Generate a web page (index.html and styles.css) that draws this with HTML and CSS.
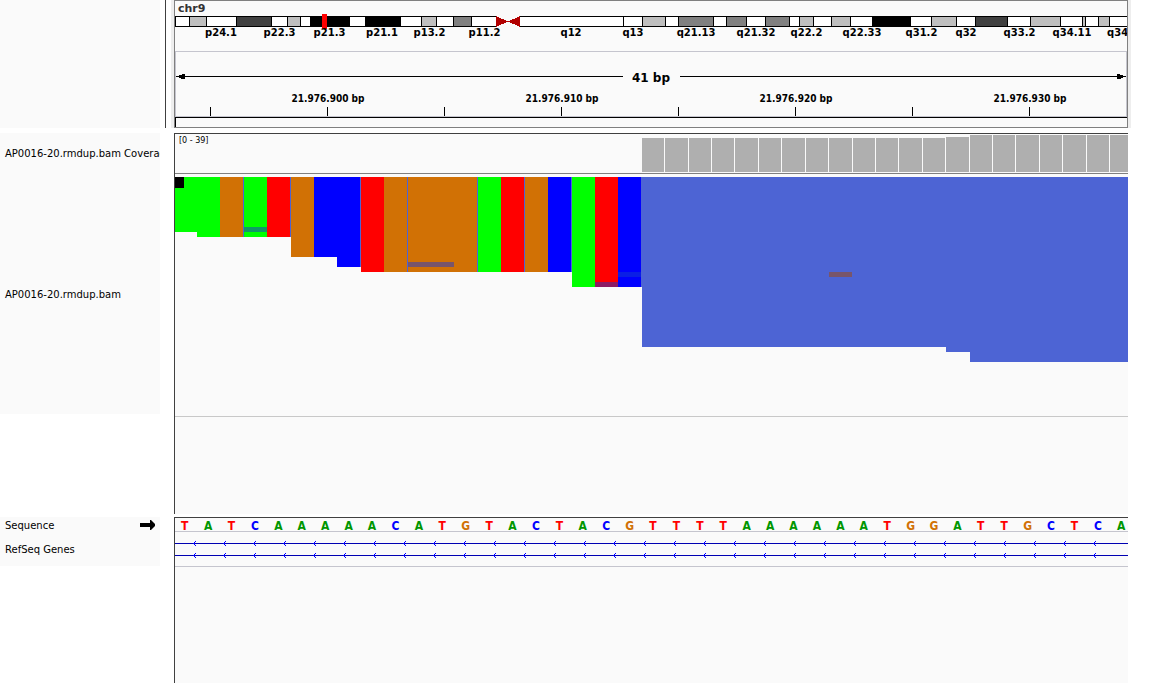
FILE: index.html
```
<!DOCTYPE html>
<html lang="en">
<head>
<meta charset="utf-8">
<title>chr9 genome viewer</title>
<link rel="stylesheet" href="styles.css">
</head>
<body>
<main class="viewer">
  <section class="row row-header">
    <div class="names"></div>
    <div class="splitter"></div>
    <div class="header-panel">
      <h1 class="chrom-name">chr9</h1>
      <svg class="ideogram" role="img" aria-label="Chromosome 9 ideogram">
        <svg class="shapes" viewBox="0 0 952 37" preserveAspectRatio="none">
          <g class="band">
            <rect class="b0" x="0.5" y="2.5" width="321" height="10"/>
            <rect class="b25" x="14.5" y="2.5" width="17" height="10"/>
            <rect class="b75" x="61.5" y="2.5" width="35" height="10"/>
            <rect class="b25" x="112.5" y="2.5" width="13" height="10"/>
            <rect class="b100" x="135.5" y="2.5" width="39" height="10"/>
            <rect class="b100" x="190.5" y="2.5" width="35" height="10"/>
            <rect class="b25" x="246.5" y="2.5" width="15" height="10"/>
            <rect class="b50" x="278.5" y="2.5" width="18" height="10"/>
            <rect class="b0" x="344.5" y="2.5" width="612" height="10"/>
            <rect class="b0" x="448.5" y="2.5" width="19" height="10"/>
            <rect class="b25" x="467.5" y="2.5" width="23" height="10"/>
            <rect class="b50" x="503.5" y="2.5" width="35" height="10"/>
            <rect class="b50" x="551.5" y="2.5" width="20" height="10"/>
            <rect class="b50" x="590.5" y="2.5" width="24" height="10"/>
            <rect class="b25" x="624.5" y="2.5" width="14" height="10"/>
            <rect class="b25" x="656.5" y="2.5" width="19" height="10"/>
            <rect class="b100" x="697.5" y="2.5" width="38" height="10"/>
            <rect class="b25" x="756.5" y="2.5" width="25" height="10"/>
            <rect class="b75" x="800.5" y="2.5" width="32" height="10"/>
            <rect class="b25" x="855.5" y="2.5" width="30" height="10"/>
            <rect class="b25" x="907.5" y="2.5" width="3" height="10"/>
            <rect class="b25" x="923.5" y="2.5" width="11" height="10"/>
          </g>
          <path class="centromere" d="M321 2L333 7.500L321 13ZM345 2L333 7.500L345 13Z"/>
          <rect class="locus" x="147" y="0" width="5" height="15"/>
        </svg>
        <g class="band-names">
          <text x="4.83%" y="22">p24.1</text>
          <text x="10.98%" y="22">p22.3</text>
          <text x="16.23%" y="22">p21.3</text>
          <text x="21.74%" y="22">p21.1</text>
          <text x="26.73%" y="22">p13.2</text>
          <text x="32.51%" y="22">p11.2</text>
          <text x="41.6%" y="22">q12</text>
          <text x="48.11%" y="22">q13</text>
          <text x="54.73%" y="22">q21.13</text>
          <text x="61.03%" y="22">q21.32</text>
          <text x="66.33%" y="22">q22.2</text>
          <text x="72.16%" y="22">q22.33</text>
          <text x="78.41%" y="22">q31.2</text>
          <text x="83.09%" y="22">q32</text>
          <text x="88.71%" y="22">q33.2</text>
          <text x="94.22%" y="22">q34.11</text>
          <text x="99.58%" y="22">q34.3</text>
        </g>
      </svg>
      <div class="ruler">
        <svg class="ruler-scale" role="img" aria-label="Ruler, 41 base pairs">
          <svg class="shapes" viewBox="0 0 950 64" preserveAspectRatio="none">
            <path class="scale-line" d="M0 24H447V25H0ZM504 24H950V25H504Z"/>
            <path class="scale-line" d="M1 24H3V23H6V22H9V27H5V26H3V25H1ZM949 24H947V23H944V22H941V27H945V26H947V25H949Z"/>
            <path class="tick" d="M34.500 55V64M151.500 55V64M268.500 55V64M385.500 55V64M502.500 55V64M619.500 55V64M736.500 55V64M853.500 55V64"/>
          </svg>
          <text class="span-label" x="50%" y="30">41 bp</text>
          <g class="position-labels">
            <text x="16%" y="50">21.976.900 bp</text>
            <text x="40.63%" y="50">21.976.910 bp</text>
            <text x="65.26%" y="50">21.976.920 bp</text>
            <text x="89.89%" y="50">21.976.930 bp</text>
          </g>
        </svg>
      </div>
      <div class="region-strip"></div>
    </div>
    <div class="edge"></div>
  </section>

  <section class="row row-data">
    <div class="names">
      <div class="name name-coverage">AP0016-20.rmdup.bam Coverage</div>
      <div class="name name-reads">AP0016-20.rmdup.bam</div>
    </div>
    <div class="panel">
      <div class="coverage">
        <svg class="shapes" viewBox="0 0 953 39" preserveAspectRatio="none" role="img" aria-label="Coverage">
          <path class="depth" d="M467 4H771V3H795V1H953V38H467Z"/>
          <path class="depth-gap" d="M489.500 0V39M513.500 0V39M536.500 0V39M559.500 0V39M583.500 0V39M606.500 0V39M630.500 0V39M653.500 0V39M677.500 0V39M700.500 0V39M723.500 0V39M747.500 0V39M770.500 0V39M794.500 0V39M817.500 0V39M840.500 0V39M864.500 0V39M887.500 0V39M911.500 0V39M934.500 0V39"/>
        </svg>
        <span class="range">[0 - 39]</span>
      </div>
      <div class="reads">
        <svg class="shapes" viewBox="0 0 953 239" preserveAspectRatio="none" role="img" aria-label="Aligned reads">
          <path class="read" d="M68 0H116V60H68ZM185 0H186V90H185ZM232 0H233V95H232ZM302 0H303V95H302ZM349 0H350V95H349ZM396 0H397V95H396ZM466 0H953V185H795V175H771V170H467V110H466Z"/>
          <path class="base-a" d="M0 0H45V60H22V55H0ZM69 0H92V60H69ZM303 0H326V95H303ZM397 0H420V110H397Z"/>
          <path class="base-g" d="M45 0H68V60H45ZM116 0H139V80H116ZM209 0H232V95H209ZM233 0H302V95H233ZM350 0H373V95H350Z"/>
          <path class="base-t" d="M92 0H115V60H92ZM186 0H209V95H186ZM326 0H349V95H326ZM420 0H443V110H420Z"/>
          <path class="base-c" d="M139 0H185V90H162V80H139ZM373 0H396V95H373ZM443 0H466V110H443Z"/>
          <rect class="faint-a" x="69" y="50" width="23" height="5"/>
          <rect class="faint-g" x="233" y="85" width="46" height="5"/>
          <rect class="faint-t" x="420" y="105" width="23" height="5"/>
          <rect class="faint-c" x="443" y="95" width="23" height="5"/>
          <rect class="faint-g" x="654" y="95" width="23" height="5"/>
          <rect class="corner" x="0" y="0" width="9" height="11"/>
        </svg>
      </div>
    </div>
  </section>

  <section class="row row-features">
    <div class="names">
      <div class="name name-sequence">
        <span>Sequence</span>
        <button class="strand" type="button" aria-label="Flip strand">
          <svg width="15" height="10" viewBox="0 0 15 10"><path d="M0 3H10V0H11L15 4V6L11 10H10V7H0Z"/></svg>
        </button>
      </div>
      <div class="name name-genes">RefSeq Genes</div>
    </div>
    <div class="panel">
      <div class="sequence">
        <b class="t">T</b><b class="a">A</b><b class="t">T</b><b class="c">C</b><b class="a">A</b><b class="a">A</b><b class="a">A</b><b class="a">A</b><b class="a">A</b><b class="c">C</b><b class="a">A</b><b class="t">T</b><b class="g">G</b><b class="t">T</b><b class="a">A</b><b class="c">C</b><b class="t">T</b><b class="a">A</b><b class="c">C</b><b class="g">G</b><b class="t">T</b><b class="t">T</b><b class="t">T</b><b class="t">T</b><b class="a">A</b><b class="a">A</b><b class="a">A</b><b class="a">A</b><b class="a">A</b><b class="a">A</b><b class="t">T</b><b class="g">G</b><b class="g">G</b><b class="a">A</b><b class="t">T</b><b class="t">T</b><b class="g">G</b><b class="c">C</b><b class="t">T</b><b class="c">C</b><b class="a">A</b>
      </div>
      <div class="genes">
        <svg class="gene-lines" role="img" aria-label="RefSeq transcripts on the reverse strand">
          <defs>
            <pattern id="strand-marks" x="4" y="0" width="30" height="12" patternUnits="userSpaceOnUse">
              <path class="chevron" d="M14 5h2v1h-2zM15 4h1v1h-1zM16 3h1v1h-1zM15 6h1v1h-1zM16 7h1v1h-1z"/>
            </pattern>
          </defs>
          <rect class="intron" y="5" width="100%" height="1"/>
          <rect class="intron" y="17" width="100%" height="1"/>
          <rect width="98%" height="24" fill="url(#strand-marks)"/>
        </svg>
      </div>
    </div>
  </section>
</main>
</body>
</html>
```
FILE: styles.css
```
* { box-sizing: border-box; }

body {
  margin: 0;
  background: #fff;
  color: #000;
  font-family: "DejaVu Sans", Verdana, sans-serif;
  font-size: 10px;
  line-height: 12px;
}

svg { display: block; }

.viewer {
  display: flex;
  flex-direction: column;
  min-height: 100vh;
}

.row {
  display: flex;
  align-items: stretch;
  padding-right: 22px;
}

.names {
  flex: none;
  width: 160px;
  margin-right: 14px;
  background: #fafafa;
}

.name {
  padding-left: 5px;
  overflow: hidden;
  white-space: nowrap;
}

.shapes {
  width: 100%;
  height: 100%;
  shape-rendering: crispEdges;
}

/* Header: ideogram and ruler */
.row-header { padding-right: 19px; margin-bottom: 5px; }
.row-header .names { margin-right: 5px; }

.splitter {
  flex: none;
  width: 9px;
  border-left: 1px solid #404040;
  border-right: 3px solid #eee;
}

.edge { flex: none; width: 3px; background: #eee; }

.header-panel {
  flex: 1;
  min-width: 0;
  border: 1px solid #808080;
  background: #fafafa;
}

.chrom-name {
  height: 13px;
  margin: 0;
  padding-left: 3px;
  color: #333;
  font-size: 11px;
  font-weight: bold;
  line-height: 16px;
}

.ideogram { width: 100%; height: 37px; }
.band rect { stroke: #000; stroke-width: 1; }
.b0 { fill: #fff; }
.b25 { fill: #bfbfbf; }
.b50 { fill: #808080; }
.b75 { fill: #404040; }
.b100 { fill: #000; }
.centromere { fill: #b20000; }
.locus { fill: #f00; }
.band-names { font-size: 10px; font-weight: bold; text-anchor: middle; }

.ruler { height: 66px; border: 1px solid #c5c5ce; }
.ruler-scale { width: 100%; height: 64px; }
.scale-line { fill: #000; }
.tick { stroke: #000; stroke-width: 1; }
.span-label { font-size: 12px; font-weight: bold; text-anchor: middle; }
.position-labels {
  font-family: "DejaVu Sans Condensed", "DejaVu Sans", sans-serif;
  font-size: 10px;
  font-weight: bold;
  text-anchor: middle;
}

.region-strip {
  height: 10px;
  border-top: 1px solid #000;
  border-left: 1px solid #000;
}

/* Track panels */
.panel {
  flex: 1;
  min-width: 0;
  border-top: 1px solid #404040;
  border-left: 1px solid #404040;
  background: #fafafa;
}

.row-data { margin-bottom: 3px; }
.row-data .names { margin-bottom: 100px; }
.row-data .panel { padding-bottom: 97px; }
.name-coverage { padding-top: 15px; }
.name-reads { padding: 129px 0 113px 5px; }

.coverage {
  position: relative;
  height: 40px;
  border-bottom: 1px solid #808080;
}

.range {
  position: absolute;
  top: 1px;
  left: 4px;
  font-size: 8px;
}

.reads {
  height: 243px;
  padding-top: 3px;
  border-bottom: 1px solid #c8c8c8;
}

.depth { fill: #afafaf; }
.depth-gap { stroke: #fafafa; stroke-width: 1; }
.read { fill: #4d64d4; }
.base-a { fill: #0f0; }
.base-c { fill: #00f; }
.base-g { fill: #d17105; }
.base-t { fill: #f00; }
.faint-a { fill: #0f9966; }
.faint-c { fill: #0a1ee6; }
.faint-g { fill: #78556b; }
.faint-t { fill: #8c1c64; }

/* Sequence and genes */
.row-features { flex: 1; }
.row-features .names { align-self: flex-start; padding-bottom: 10px; }

.name-sequence {
  display: flex;
  align-items: flex-start;
  justify-content: space-between;
  padding: 3px 5px 0 5px;
}

.strand {
  height: 10px;
  margin: 0;
  padding: 0;
  border: 0;
  background: none;
}

.name-genes { padding-top: 12px; }

.sequence {
  display: grid;
  grid-template-columns: repeat(41, 1fr);
  height: 14px;
  border-bottom: 1px solid #c5c5ce;
  margin: 0 -5px 0 -2px;
  font-family: "DejaVu Sans Condensed", "DejaVu Sans", sans-serif;
  font-size: 12px;
  line-height: 16px;
  text-align: center;
}

.row-features .panel { overflow: hidden; }
.a { color: #009600; }
.c { color: #00f; }
.g { color: #d17105; }
.t { color: #f00; }

.genes {
  height: 35px;
  padding-top: 6px;
  border-bottom: 1px solid #c5c5ce;
}

.gene-lines { width: 100%; height: 24px; shape-rendering: crispEdges; }
.intron { fill: #0000b2; }
.chevron { fill: #00f; }
```
